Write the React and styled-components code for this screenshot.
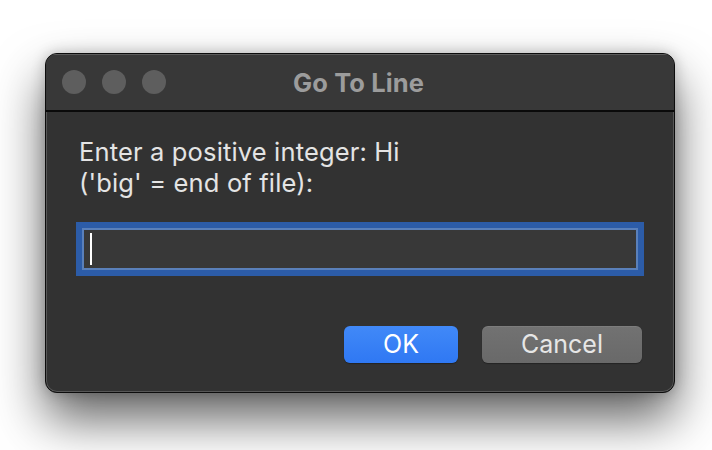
import React from "react";
import styled, { createGlobalStyle } from "styled-components";

const Global = createGlobalStyle`
  html, body { margin: 0; padding: 0; background: #ffffff; }
  body { font-family: Inter, "Liberation Sans", Arial, sans-serif; }
  * { box-sizing: border-box; }
`;

const Page = styled.div`
  width: 712px;
  height: 450px;
  padding: 53px 0 0 45px;
  background: #ffffff;
  overflow: hidden;
`;

const Window = styled.div`
  width: 630px;
  display: flex;
  flex-direction: column;
  background: #323232;
  border: 1px solid #0c0c0c;
  border-radius: 12px;
  overflow: hidden;
  box-shadow: inset 0 0 0 1px rgba(255, 255, 255, 0.18),
    0 26px 50px rgba(0, 0, 0, 0.62), 0 0 14px rgba(0, 0, 0, 0.22);
`;

const TitleBar = styled.div`
  position: relative;
  height: 58px;
  display: flex;
  align-items: center;
  justify-content: center;
  background: #383838;
  border-bottom: 2px solid #0a0a0a;
  box-shadow: inset 0 1px 0 rgba(255, 255, 255, 0.18);
`;

const Lights = styled.div`
  position: absolute;
  left: 16px;
  top: 16px;
  display: flex;
  gap: 16px;
`;

const Light = styled.span`
  width: 24px;
  height: 24px;
  border-radius: 50%;
  background: #5e5e5e;
`;

const Title = styled.div`
  font-size: 25.5px;
  font-weight: 700;
  color: #9c9c9c;
  letter-spacing: 0.1px;
  margin-left: -3px;
`;

const Body = styled.div`
  display: flex;
  flex-direction: column;
  padding: 24px 0 29px;
`;

const Prompt = styled.div`
  padding: 0 33px;
  font-size: 25.5px;
  line-height: 31px;
  letter-spacing: 0.15px;
  color: #e4e4e4;
`;

const FieldRow = styled.div`
  padding: 30px 36px 0;
`;

const Field = styled.div`
  height: 42px;
  display: flex;
  align-items: center;
  padding-left: 6px;
  background: #383838;
  border: 2px solid #5a80ba;
  box-shadow: 0 0 0 6px #2c5ca8;
`;

const Caret = styled.span`
  width: 2px;
  height: 32px;
  background: #ffffff;
`;

const Buttons = styled.div`
  display: flex;
  justify-content: flex-end;
  gap: 24px;
  padding: 56px 32px 0 0;
`;

const Button = styled.button`
  height: 37px;
  width: ${(p) => p.$w}px;
  border: none;
  border-radius: 6px;
  font-family: Inter, "Liberation Sans", Arial, sans-serif;
  font-size: 25px;
  line-height: 37px;
  padding: 0;
  color: ${(p) => (p.$primary ? "#ffffff" : "#e6e6e6")};
  background: ${(p) =>
    p.$primary
      ? "linear-gradient(#4189f8, #2f78f3)"
      : "linear-gradient(#727272, #696969)"};
  box-shadow: ${(p) =>
    p.$primary
      ? "0 1px 1px rgba(0,0,0,0.3)"
      : "inset 0 1px 0 rgba(255,255,255,0.08), 0 1px 1px rgba(0,0,0,0.3)"};
`;

export default function App() {
  return (
    <>
      <Global />
      <Page>
        <Window>
          <TitleBar>
            <Lights>
              <Light />
              <Light />
              <Light />
            </Lights>
            <Title>Go To Line</Title>
          </TitleBar>
          <Body>
            <Prompt>
              Enter a positive integer: Hi
              <br />
              ('big' = end of file):
            </Prompt>
            <FieldRow>
              <Field>
                <Caret />
              </Field>
            </FieldRow>
            <Buttons>
              <Button $primary $w={114}>OK</Button>
              <Button $w={160}>Cancel</Button>
            </Buttons>
          </Body>
        </Window>
      </Page>
    </>
  );
}
